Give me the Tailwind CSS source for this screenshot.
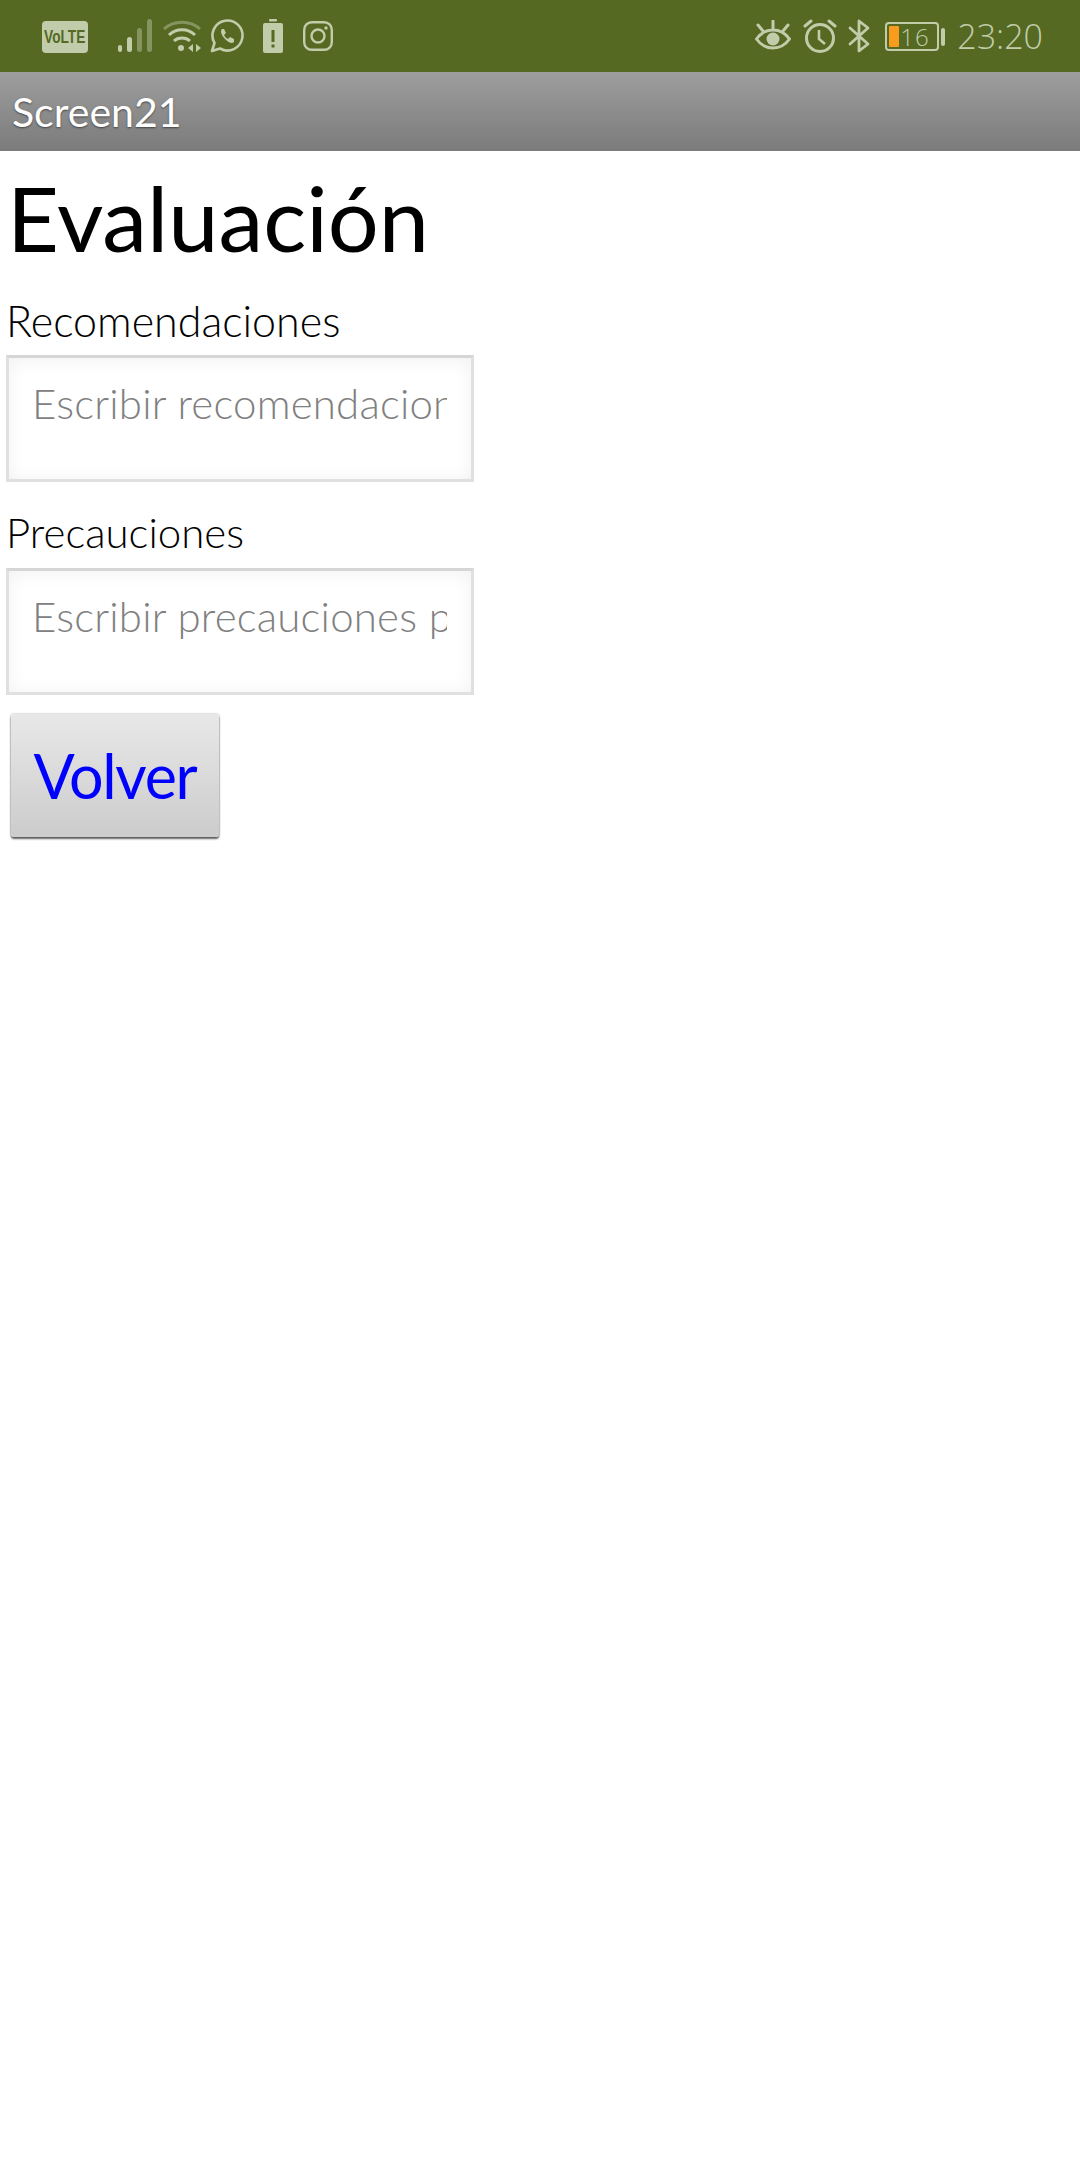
<!DOCTYPE html>
<html lang="es">
<head>
    <meta charset="UTF-8">
    <meta name="viewport" content="width=device-width, initial-scale=1.0">
    <title>Screen21</title>
    <script src="https://cdn.jsdelivr.net/npm/@tailwindcss/browser@4"></script>
</head>
<body class="bg-white w-[1080px] h-[2160px] overflow-hidden font-['Lato',sans-serif]">
    <!-- barra de estado -->
    <div class="h-[72px] bg-[#556923] flex items-center justify-between pl-[42px] pr-[37px] text-[#c0ccaa]">
        <div class="flex items-center">
            <div class="w-[46px] h-[32px] rounded-[4px] bg-[#c0ccaa] text-[#556923] flex items-center justify-center mt-[1px] overflow-hidden">
                <span class="shrink-0 text-[19px] leading-none font-bold font-['Liberation_Sans',sans-serif] scale-x-[0.72]">VoLTE</span>
            </div>
            <svg class="ml-[29px]" width="36" height="34" viewBox="0 0 36 34" fill="#c0ccaa">
                <rect x="1" y="26" width="4" height="7" rx="2"/>
                <rect x="10" y="18" width="5" height="15" rx="2.500"/>
                <rect x="20" y="9" width="5" height="24" rx="2.500" opacity=".45"/>
                <rect x="30" y="0" width="5" height="33" rx="2.500" opacity=".45"/>
            </svg>
            <svg class="ml-[9px]" width="40" height="34" viewBox="0 0 40 34" fill="none" stroke="#c0ccaa" stroke-width="3">
                <path d="M2 10C12 1 28 1 38 10" opacity=".45"/>
                <path d="M7 16C14 9 26 9 33 16"/>
                <path d="M12 22C16 18 24 18 28 22"/>
                <circle cx="19" cy="29" r="3" fill="#c0ccaa" stroke="none"/>
                <path d="M31 25v8l-5-4zM34 25v8l5-4z" fill="#c0ccaa" stroke="none"/>
            </svg>
            <svg class="ml-[8px]" width="34" height="34" viewBox="0 0 34 34" fill="none" stroke="#c0ccaa" stroke-width="2.600">
                <path d="M2 32l2.500-8A15 15 0 1 1 10 29.500z" stroke-linejoin="round"/>
                <path d="M12 10c-2 2-1 6 3 10s7 5 9 3l0-3-4-2-2 2c-2-1-3-2-4-4l2-2-2-4z" fill="#c0ccaa" stroke="none"/>
            </svg>
            <svg class="ml-[19px]" width="20" height="34" viewBox="0 0 20 34" fill="#c0ccaa">
                <rect x="6" y="0" width="8" height="2.500" rx="1"/>
                <path d="M2 4h16a2 2 0 0 1 2 2v26a2 2 0 0 1-2 2H2a2 2 0 0 1-2-2V6a2 2 0 0 1 2-2z"/>
                <rect x="8.500" y="11" width="3" height="12" fill="#556923"/>
                <rect x="8.500" y="25.500" width="3" height="3" fill="#556923"/>
            </svg>
            <svg class="ml-[20px]" width="30" height="30" viewBox="0 0 30 30" fill="none" stroke="#c0ccaa" stroke-width="2.400">
                <rect x="1.200" y="1.200" width="27.600" height="27.600" rx="7.500"/>
                <circle cx="15" cy="15" r="6.500"/>
                <circle cx="23" cy="7" r="1.700" fill="#c0ccaa" stroke="none"/>
            </svg>
        </div>
        <div class="flex items-center">
            <svg width="36" height="32" viewBox="0 0 36 32" fill="none" stroke="#c0ccaa" stroke-width="3">
                <path d="M1.500 19C10 7 26 7 34.500 19C26 31 10 31 1.500 19z"/>
                <circle cx="18" cy="19" r="6.500" fill="#c0ccaa" stroke="none"/>
                <path d="M18 1v7M3 5l5 6M33 5l-5 6" stroke-linecap="round"/>
            </svg>
            <svg class="ml-[12px]" width="34" height="34" viewBox="0 0 34 34" fill="none" stroke="#c0ccaa" stroke-width="3">
                <circle cx="17" cy="19" r="13.500"/>
                <path d="M16 11v9l6 5" stroke-width="2.600"/>
                <path d="M2 7l6-5M32 7l-6-5" stroke-linecap="round"/>
            </svg>
            <svg class="ml-[11px]" width="22" height="34" viewBox="0 0 22 34" fill="none" stroke="#c0ccaa" stroke-width="2.800" stroke-linecap="round" stroke-linejoin="round">
                <path d="M2 9l18 16-9 7V2l9 7L2 25"/>
            </svg>
            <div class="ml-[15px] w-[54px] h-[29px] rounded-[4px] border-2 border-[#c0ccaa] flex items-center pl-[2px] mt-[1px]">
                <div class="w-[10px] h-[21px] bg-[#f79c1c] rounded-[1px]"></div>
                <span class="text-[24px] leading-none font-light ml-[1px] tracking-[1px] font-['Open_Sans',sans-serif]">16</span>
            </div>
            <div class="ml-[2px] w-[4px] h-[18px] bg-[#c0ccaa] rounded-[2px] mt-[1px]"></div>
            <span class="ml-[12px] text-[34px] leading-none font-light font-['Open_Sans',sans-serif]">23:20</span>
        </div>
    </div>

    <!-- barra de titulo -->
    <div class="h-[79px] bg-gradient-to-b from-[#9e9e9e] to-[#7b7b7b] flex items-center pl-[12px]">
        <span class="text-[41px] leading-none text-white [text-shadow:0_1px_2px_rgba(0,0,0,0.5)]">Screen21</span>
    </div>

    <div class="flex flex-col items-start">
        <h1 class="pl-[7px] pt-[14px] text-[90px] leading-[104px] text-black">Evaluación</h1>

        <p class="pl-[6px] pt-[26px] text-[43px] leading-[52px] font-light text-black">Recomendaciones</p>
        <div class="ml-[6px] mt-[8px] w-[468px] h-[127px] border-[3px] border-[#e0e0e0] border-t-[#d6d6d6] shadow-[inset_0_2px_18px_rgba(0,0,0,0.06)] pl-[23px] pr-[24px] pt-[20px]">
            <div class="overflow-hidden whitespace-nowrap text-[42px] leading-[50px] tracking-[0.2px] font-light text-[#808080]">Escribir recomendaciones para</div>
        </div>

        <p class="pl-[6px] pt-[24px] text-[42px] leading-[52px] font-light text-black">Precauciones</p>
        <div class="ml-[6px] mt-[10px] w-[468px] h-[127px] border-[3px] border-[#e0e0e0] border-t-[#d6d6d6] shadow-[inset_0_2px_18px_rgba(0,0,0,0.06)] pl-[23px] pr-[24px] pt-[20px]">
            <div class="overflow-hidden whitespace-nowrap text-[42px] leading-[50px] tracking-[0.2px] font-light text-[#808080]">Escribir precauciones para</div>
        </div>

        <button class="ml-[11px] mt-[19px] w-[208px] h-[123px] rounded-[3px] bg-gradient-to-b from-[#e8e8e8] to-[#cccccc] shadow-[0_2px_2px_rgba(0,0,0,0.6),0_0_2px_rgba(0,0,0,0.4)] text-[61px] tracking-[-1.3px] leading-none text-[#0000ff]">Volver</button>
    </div>
</body>
</html>
